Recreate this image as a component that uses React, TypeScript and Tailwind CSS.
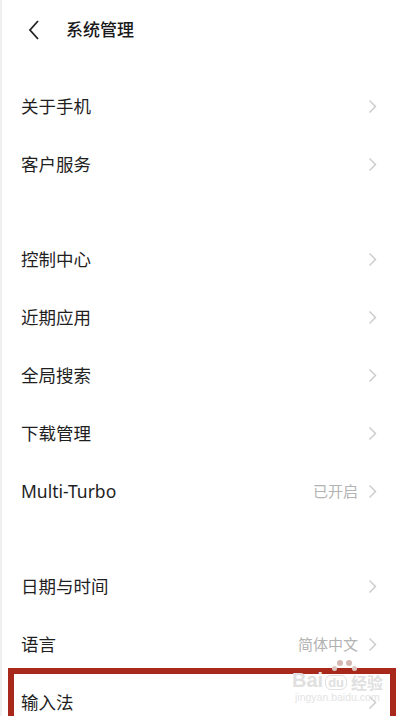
import React from 'react';

type Item = { label: string; value?: string };

const groups: Item[][] = [
  [{ label: '关于手机' }, { label: '客户服务' }],
  [
    { label: '控制中心' },
    { label: '近期应用' },
    { label: '全局搜索' },
    { label: '下载管理' },
    { label: 'Multi-Turbo', value: '已开启' },
  ],
  [{ label: '日期与时间' }, { label: '语言', value: '简体中文' }],
];

const font = { fontFamily: '"Noto Sans", "Noto Sans CJK SC", sans-serif' };

function Chevron() {
  return (
    <svg width="9" height="15" viewBox="0 0 9 15" className="shrink-0">
      <polyline points="1.5,1.5 7.5,7.5 1.5,13.5" fill="none" stroke="#c9c9c9" strokeWidth="1.4" />
    </svg>
  );
}

function Row({ item }: { item: Item }) {
  return (
    <div className="h-[58px] flex items-center justify-between pl-[19px] pr-[32px]">
      <span className="text-[17.5px] text-[#1f1f1f]">{item.label}</span>
      <div className="flex items-center gap-[10px]">
        {item.value && <span className="text-[15px] text-[#b3b3b3]">{item.value}</span>}
        <Chevron />
      </div>
    </div>
  );
}

function Watermark() {
  return (
    <div className="absolute left-[290px] top-[-12px] w-[100px] h-[46px] pointer-events-none select-none">
      {/* paw */}
      <div className="absolute left-[45px] top-[-1px] w-[6px] h-[6px] rounded-full bg-[#d6b8b2]" />
      <div className="absolute left-[54px] top-[-1px] w-[6px] h-[6px] rounded-full bg-[#d6b8b2]" />
      <div className="absolute left-[40px] top-[5px] w-[5px] h-[5px] rounded-full bg-[#ddc6c1]" />
      <div className="absolute left-[60px] top-[5px] w-[5px] h-[5px] rounded-full bg-[#ddc6c1]" />
      <div className="absolute left-[0px] top-[9px] flex items-end gap-[2px] text-[#e0e0e0] font-bold leading-none">
        <span className="text-[20px]" style={{ fontFamily: '"Liberation Sans", sans-serif' }}>Bai</span>
        <span className="text-[13px] px-[2px] rounded-[6px] border border-[#e0e0e0]" style={{ fontFamily: '"Liberation Sans", sans-serif' }}>du</span>
        <span className="text-[16px] ml-[2px]" style={{ fontFamily: '"Noto Sans CJK SC", sans-serif' }}>经验</span>
      </div>
      <div className="absolute left-[3px] top-[31px] text-[10.5px] text-[#e4e4e4] leading-none" style={{ fontFamily: '"Liberation Sans", sans-serif' }}>
        jingyan.baidu.com
      </div>
    </div>
  );
}

export default function App() {
  return (
    <div className="w-[409px] h-[716px] overflow-hidden bg-white border-l-2 border-[#f0f0f0]" style={font}>
      {/* Header */}
      <div className="h-[60px] flex items-center">
        <svg width="14" height="22" viewBox="0 0 14 22" className="ml-[25px]">
          <polyline points="11,2 3,11 11,20" fill="none" stroke="#222" strokeWidth="1.8" />
        </svg>
        <span className="ml-[25px] text-[17px] text-[#1a1a1a] font-medium">系统管理</span>
      </div>

      <div className="pt-[17px] flex flex-col gap-[37px]">
        {groups.map((g, i) => (
          <div key={i} className="flex flex-col">
            {g.map((item) => (
              <Row key={item.label} item={item} />
            ))}
          </div>
        ))}
      </div>

      {/* highlighted row */}
      <div className="relative">
        <Row item={{ label: '输入法' }} />
        <div className="absolute left-[6px] right-[13px] top-[-5px] bottom-[-30px] border-[6px] border-[#a8281c] pointer-events-none" />
        <Watermark />
      </div>
    </div>
  );
}
